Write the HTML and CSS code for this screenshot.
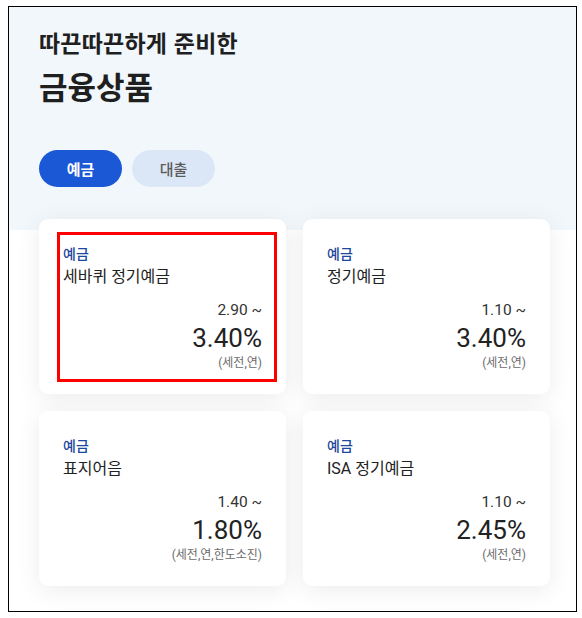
FILE: index.html
```html
<!DOCTYPE html>
<html lang="ko">
<head>
<meta charset="utf-8">
<title>금융상품</title>
<link rel="stylesheet" href="styles.css">
</head>
<body>
<div class="frame">
  <section class="hero">
    <p class="hero-sub">따끈따끈하게 준비한</p>
    <h1 class="hero-title">금융상품</h1>
    <div class="tabs">
      <button class="tab tab-active">예금</button>
      <button class="tab">대출</button>
    </div>
  </section>
  <section class="grid">
    <div class="card card-focus">
      <span class="card-type">예금</span>
      <span class="card-name">세바퀴 정기예금</span>
      <span class="card-min">2.90 ~</span>
      <span class="card-max">3.40%</span>
      <span class="card-note">(세전,연)</span>
      <span class="focus-box"></span>
    </div>
    <div class="card">
      <span class="card-type">예금</span>
      <span class="card-name">정기예금</span>
      <span class="card-min">1.10 ~</span>
      <span class="card-max">3.40%</span>
      <span class="card-note">(세전,연)</span>
    </div>
    <div class="card">
      <span class="card-type">예금</span>
      <span class="card-name">표지어음</span>
      <span class="card-min">1.40 ~</span>
      <span class="card-max">1.80%</span>
      <span class="card-note">(세전,연,한도소진)</span>
    </div>
    <div class="card">
      <span class="card-type">예금</span>
      <span class="card-name">ISA 정기예금</span>
      <span class="card-min">1.10 ~</span>
      <span class="card-max">2.45%</span>
      <span class="card-note">(세전,연)</span>
    </div>
  </section>
</div>
</body>
</html>
```

FILE: styles.css
```css
* { box-sizing: border-box; }
html, body { margin: 0; padding: 0; background: #fff; }
body {
  padding: 6px 6px 0 8px;
  font-family: Roboto, "Noto Sans CJK KR", sans-serif;
  color: #222;
}
.frame {
  width: 569px;
  height: 606px;
  border: 1px solid #000;
  background: linear-gradient(#f2f7fc 0, #f2f7fc 223px, #ffffff 223px);
  overflow: hidden;
}
.hero {
  padding: 20px 0 0 30px;
}
.hero-sub {
  margin: 0;
  font-family: "Noto Sans CJK KR", sans-serif;
  font-size: 23px;
  line-height: 30px;
  font-weight: 700;
  letter-spacing: 0.2px;
  color: #1f1f1f;
}
.hero-title {
  margin: 9px 0 0;
  font-family: "Noto Sans CJK KR", sans-serif;
  font-size: 31px;
  line-height: 40px;
  font-weight: 700;
  letter-spacing: 0;
  color: #1f1f1f;
}
.tabs {
  display: flex;
  gap: 10px;
  margin-top: 44px;
}
.tab {
  width: 83px;
  height: 37px;
  border: 0;
  border-radius: 19px;
  padding: 0;
  background: #dbe7f6;
  color: #5a5a5a;
  font-family: "Noto Sans CJK KR", sans-serif;
  font-size: 15px;
  font-weight: 500;
}
.tab-active {
  background: #1a58d6;
  color: #fff;
  font-weight: 700;
}
.grid {
  display: grid;
  grid-template-columns: 247px 247px;
  gap: 17px;
  padding: 32px 0 0 30px;
}
.card {
  position: relative;
  display: flex;
  flex-direction: column;
  height: 175px;
  padding: 25px 24px 23px;
  background: #fff;
  border-radius: 9px;
  box-shadow: 0 4px 24px rgba(0, 0, 0, 0.08);
}
.card-type {
  font-family: "Noto Sans CJK KR", sans-serif;
  font-size: 14px;
  line-height: 18px;
  font-weight: 500;
  color: #1c479c;
}
.card-name {
  margin-top: 4px;
  font-size: 16px;
  line-height: 22px;
  color: #222;
}
.card-min {
  margin-top: 12px;
  text-align: right;
  font-size: 15.5px;
  line-height: 20px;
  color: #333;
}
.card-max {
  margin-top: 3px;
  text-align: right;
  font-size: 26px;
  line-height: 30px;
  color: #222;
}
.card-note {
  margin-top: 2px;
  text-align: right;
  font-size: 12px;
  line-height: 16px;
  color: #6b6b6b;
}
.focus-box {
  position: absolute;
  left: 18px;
  top: 13px;
  right: 9px;
  bottom: 12px;
  border: 3px solid #ff0000;
}
```
